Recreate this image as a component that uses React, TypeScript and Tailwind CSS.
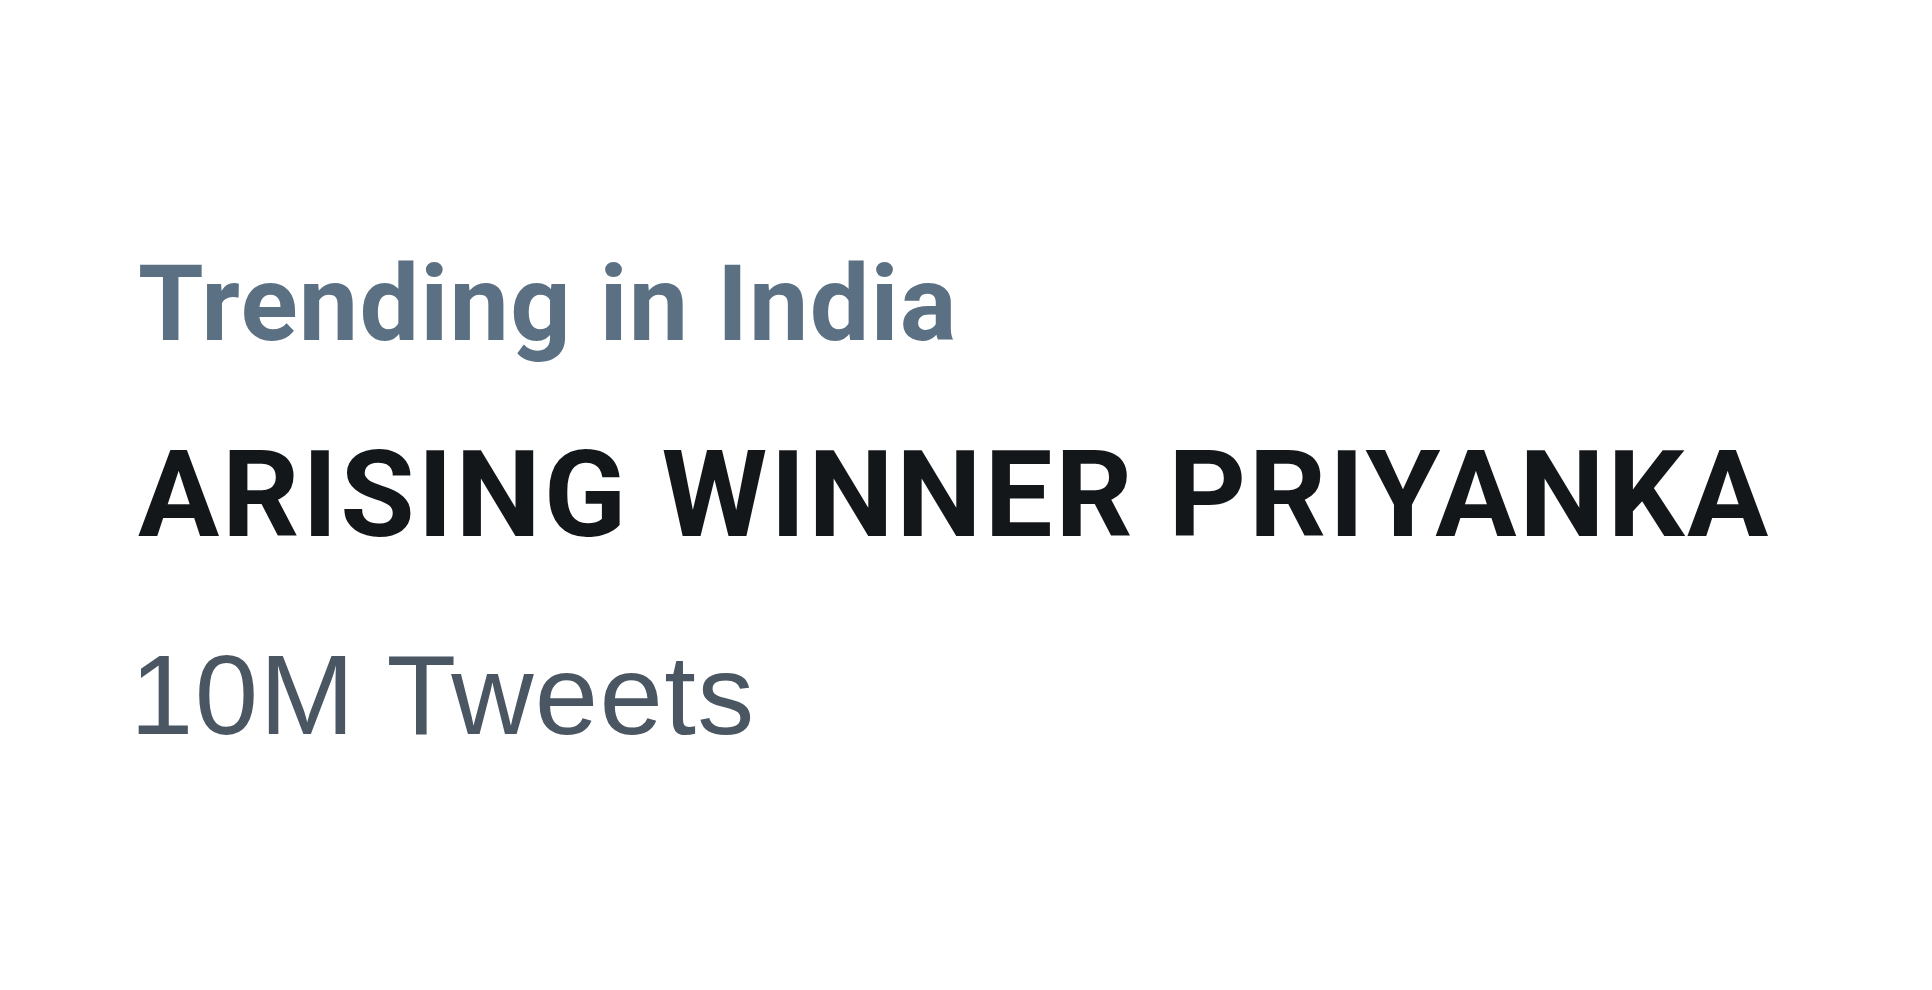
export default function App() {
  return (
    <div className="min-h-[990px] w-full bg-white">
      <div className="flex flex-col pl-[138px] pt-[251px]">
        <div className="text-[106px] leading-none font-bold text-[#5b7083] font-['Roboto',sans-serif] tracking-[1.2px]">
          Trending in India
        </div>
        <div className="mt-[78px] text-[121px] leading-none font-bold text-[#14171a] font-['Roboto',sans-serif] tracking-[2.7px]">
          ARISING WINNER PRIYANKA
        </div>
        <div className="-ml-[8px] mt-[82px] text-[114px] leading-none text-[#4a5662] font-['Liberation_Sans',Arial,sans-serif] tracking-[1.3px]">
          10M Tweets
        </div>
      </div>
    </div>
  );
}
